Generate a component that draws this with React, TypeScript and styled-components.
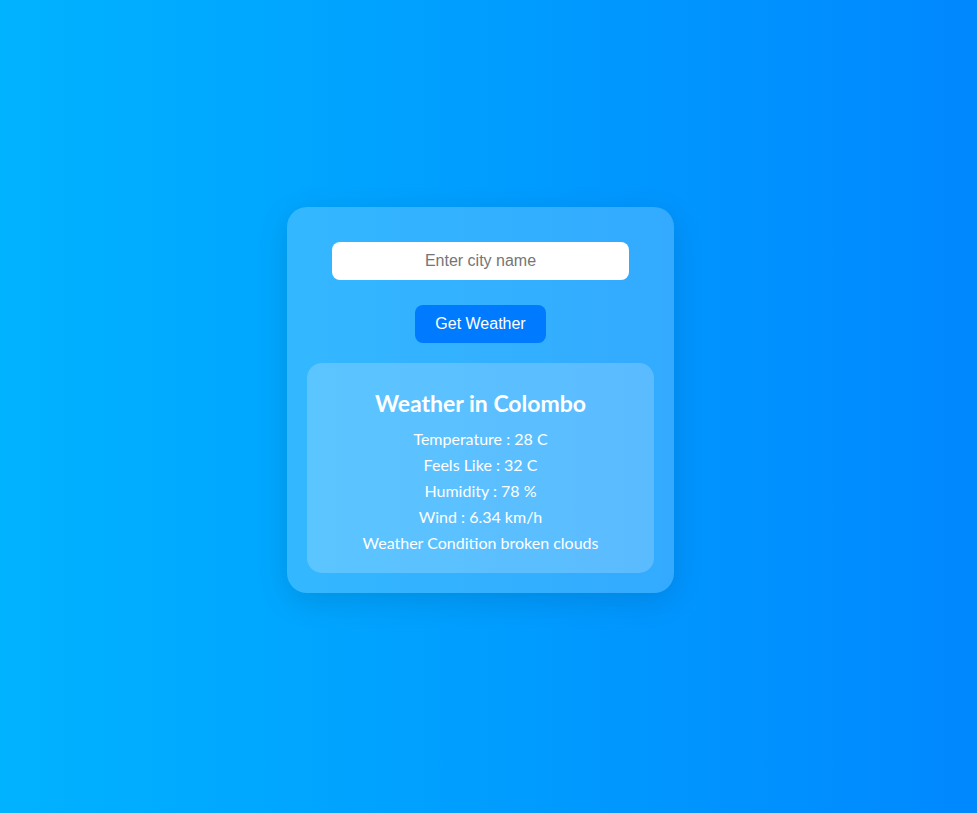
import React from "react";
import styled, { createGlobalStyle } from "styled-components";

const GlobalStyle = createGlobalStyle`
  html, body {
    margin: 0;
    padding: 0;
  }
  body {
    min-height: 100vh;
    background: linear-gradient(to right, #00b3ff, #0088ff);
    font-family: "Lato", "Open Sans", sans-serif;
  }
`;

const Page = styled.div`
  box-sizing: border-box;
  height: 100vh;
  padding: 0 16px 13px 0;
  display: flex;
  align-items: center;
  justify-content: center;
`;

const Card = styled.div`
  width: 347px;
  padding: 20px;
  border-radius: 20px;
  background: rgba(255, 255, 255, 0.2);
  box-shadow: 0 8px 32px rgba(0, 0, 0, 0.12);
  display: flex;
  flex-direction: column;
  align-items: center;
`;

const CityInput = styled.input`
  width: 80%;
  margin-top: 15px;
  padding: 10px;
  border: none;
  border-radius: 8px;
  background: #ffffff;
  font-family: "Liberation Sans", Arial, sans-serif;
  font-size: 16px;
  line-height: 18px;
  text-align: center;
  outline: none;
  &::placeholder {
    color: #757575;
  }
`;

const Button = styled.button`
  margin-top: 25px;
  padding: 10px 20px;
  border: none;
  border-radius: 8px;
  background: #007bff;
  color: #ffffff;
  font-family: "Liberation Sans", Arial, sans-serif;
  font-size: 16px;
  line-height: 18px;
  cursor: pointer;
`;

const Result = styled.div`
  box-sizing: border-box;
  width: 100%;
  margin-top: 20px;
  padding: 20px;
  border-radius: 15px;
  background: rgba(255, 255, 255, 0.2);
  color: #ffffff;
  text-align: center;
  display: flex;
  flex-direction: column;
  gap: 5px;
`;

const Heading = styled.h2`
  margin: 6px 0 5px;
  font-size: 23px;
  line-height: 29px;
  font-weight: 700;
`;

const Line = styled.p`
  margin: 0;
  font-size: 16px;
  line-height: 21px;
`;

export default function App() {
  return (
    <>
      <GlobalStyle />
      <Page>
        <Card>
          <CityInput placeholder="Enter city name" />
          <Button>Get Weather</Button>
          <Result>
            <Heading>Weather in Colombo</Heading>
            <Line>Temperature : 28 C</Line>
            <Line>Feels Like : 32 C</Line>
            <Line>Humidity : 78 %</Line>
            <Line>Wind : 6.34 km/h</Line>
            <Line>Weather Condition broken clouds</Line>
          </Result>
        </Card>
      </Page>
    </>
  );
}
